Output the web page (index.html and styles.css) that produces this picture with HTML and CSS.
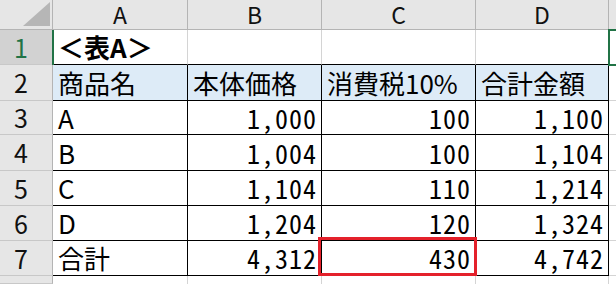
FILE: index.html
```html
<!DOCTYPE html>
<html lang="ja">
<head>
<meta charset="utf-8">
<link rel="stylesheet" href="styles.css">
</head>
<body>
<div class="sheet">
  <div class="corner"><svg width="52" height="29" viewBox="0 0 52 29"><polygon points="23,26 50,2 50,26" fill="#b6b6b6"/></svg></div>
  <div class="ch">A</div><div class="ch">B</div><div class="ch">C</div><div class="ch">D</div><div class="ch last"></div>

  <div class="rh sel">1</div>
  <div class="c r1 title">＜表A＞</div><div class="c r1"></div><div class="c r1"></div><div class="c r1"></div>
  <div class="c e"><div class="active"></div></div>

  <div class="rh">2</div>
  <div class="c t hd">商品名</div><div class="c t hd">本体価格</div><div class="c t hd">消費税10%</div><div class="c t hd">合計金額</div><div class="c e"></div>

  <div class="rh">3</div>
  <div class="c t">A</div><div class="c t n">1,000</div><div class="c t n">100</div><div class="c t n">1,100</div><div class="c e"></div>

  <div class="rh">4</div>
  <div class="c t">B</div><div class="c t n">1,004</div><div class="c t n">100</div><div class="c t n">1,104</div><div class="c e"></div>

  <div class="rh">5</div>
  <div class="c t">C</div><div class="c t n">1,104</div><div class="c t n">110</div><div class="c t n">1,214</div><div class="c e"></div>

  <div class="rh">6</div>
  <div class="c t">D</div><div class="c t n">1,204</div><div class="c t n">120</div><div class="c t n">1,324</div><div class="c e"></div>

  <div class="rh">7</div>
  <div class="c t">合計</div><div class="c t n">4,312</div><div class="c t n mark">430<div class="redbox"></div></div><div class="c t n">4,742</div><div class="c e"></div>

  <div class="rh"></div>
  <div class="c g"></div><div class="c g"></div><div class="c g"></div><div class="c g"></div><div class="c e g"></div>
</div>
</body>
</html>
```

FILE: styles.css
```css
html, body {
  margin: 0;
  padding: 0;
  background: #ffffff;
}
body {
  width: 616px;
  height: 284px;
  overflow: hidden;
  font-family: "Noto Sans CJK JP", "Noto Sans", sans-serif;
  color: #000;
}
.sheet {
  display: grid;
  grid-template-columns: 53px 135px 134px 154px 133px 1fr;
  grid-template-rows: 30px 35px 36px 34px 36px 35px 35px 35px 1fr;
  width: 616px;
  height: 284px;
  overflow: hidden;
}
.sheet > div {
  box-sizing: border-box;
  border-right: 1px solid #d4d4d4;
  border-bottom: 1px solid #d4d4d4;
  display: flex;
  align-items: center;
  white-space: nowrap;
  overflow: visible;
}
.corner {
  background: #e6e6e6;
  border-right-color: #b4b4b4 !important;
  border-bottom-color: #b4b4b4 !important;
  align-items: flex-start !important;
}
.corner svg { display: block; }
.ch {
  background: #e6e6e6;
  border-right-color: #b4b4b4 !important;
  border-bottom-color: #b4b4b4 !important;
  justify-content: center;
  font-size: 23px;
  line-height: 1;
  color: #111;
}
.rh {
  background: #e6e6e6;
  border-right-color: #b4b4b4 !important;
  border-bottom-color: #c8c8c8 !important;
  justify-content: center;
  padding-right: 10px;
  font-size: 25px;
  line-height: 1;
  color: #111;
  position: relative;
}
.rh.sel {
  background: #d2d2d2;
  color: #217346;
}
.rh.sel::after {
  content: "";
  position: absolute;
  right: -2px;
  top: 0;
  bottom: -1px;
  width: 2px;
  background: #217346;
}
.c {
  font-size: 26px;
  line-height: 1.2;
  padding: 0 5px;
}
.r1 {
  border-bottom-color: #000 !important;
}
.title {
  font-weight: bold;
  padding-left: 5px;
}
.t {
  border-right-color: #000 !important;
  border-bottom-color: #000 !important;
}
.hd {
  background: #ddebf7;
}
.n {
  justify-content: flex-end;
  font-feature-settings: "hwid" 1;
  letter-spacing: 1px;
  padding-right: 4px;
}
.mark {
  position: relative;
}
.redbox {
  position: absolute;
  left: -4px;
  top: -4px;
  width: 159px;
  height: 39px;
  box-sizing: border-box;
  border: 3px solid #e4212b;
}
.e {
  position: relative;
}
.active {
  position: absolute;
  left: -1px;
  top: -1px;
  width: 40px;
  height: 37px;
  box-sizing: border-box;
  border: 2px solid #217346;
}
.g {
  border-bottom: none !important;
}
```
